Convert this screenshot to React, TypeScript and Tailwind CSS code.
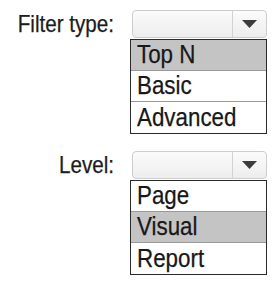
import React from "react";

const font = { fontFamily: '"Liberation Sans", Arial, sans-serif' };

function Select() {
  return (
    <div className="ml-[2px] flex h-[28px] w-[135px] rounded-[4px] border border-[#cdcdcd] bg-gradient-to-b from-[#fbfbfb] to-[#ededed]">
      <div className="flex-1" />
      <div className="flex w-[34px] items-center justify-center border-l border-[#d2d2d2]">
        <svg width="15" height="8" viewBox="0 0 15 8">
          <polygon points="0,0 15,0 7.5,8" fill="#3c3c3c" />
        </svg>
      </div>
    </div>
  );
}

function Item({ label, selected, last }: { label: string; selected?: boolean; last?: boolean }) {
  return (
    <div
      className={`flex h-[31px] items-center pl-[6px] pb-[2px] ${selected ? "bg-[#c4c4c4]" : "bg-white"} ${last ? "" : "border-b border-[#9a9a9a]"}`}
    >
      <span className="inline-block origin-left scale-x-[0.86] text-[26px] leading-none text-[#181818] [-webkit-text-stroke:0.25px_#181818]">
        {label}
      </span>
    </div>
  );
}

function Group({ label, items, selected }: { label: string; items: string[]; selected: number }) {
  return (
    <div className="flex items-start">
      <div className="flex h-[28px] w-[130px] items-center justify-end pr-[16px]">
        <span className="inline-block origin-right scale-x-[0.86] text-[24px] leading-none text-[#1c1c1c] [-webkit-text-stroke:0.25px_#1c1c1c]">
          {label}
        </span>
      </div>
      <div className="flex flex-col">
        <Select />
        <div className="mt-[1px] w-[137px] border border-[#2a2a2a] bg-white">
          {items.map((it, i) => (
            <Item key={it} label={it} selected={i === selected} last={i === items.length - 1} />
          ))}
        </div>
      </div>
    </div>
  );
}

export default function App() {
  return (
    <div className="h-[299px] w-[279px] bg-white pt-[10px]" style={font}>
      <Group label="Filter type:" items={["Top N", "Basic", "Advanced"]} selected={0} />
      <div className="mt-[17px]">
        <Group label="Level:" items={["Page", "Visual", "Report"]} selected={1} />
      </div>
    </div>
  );
}
